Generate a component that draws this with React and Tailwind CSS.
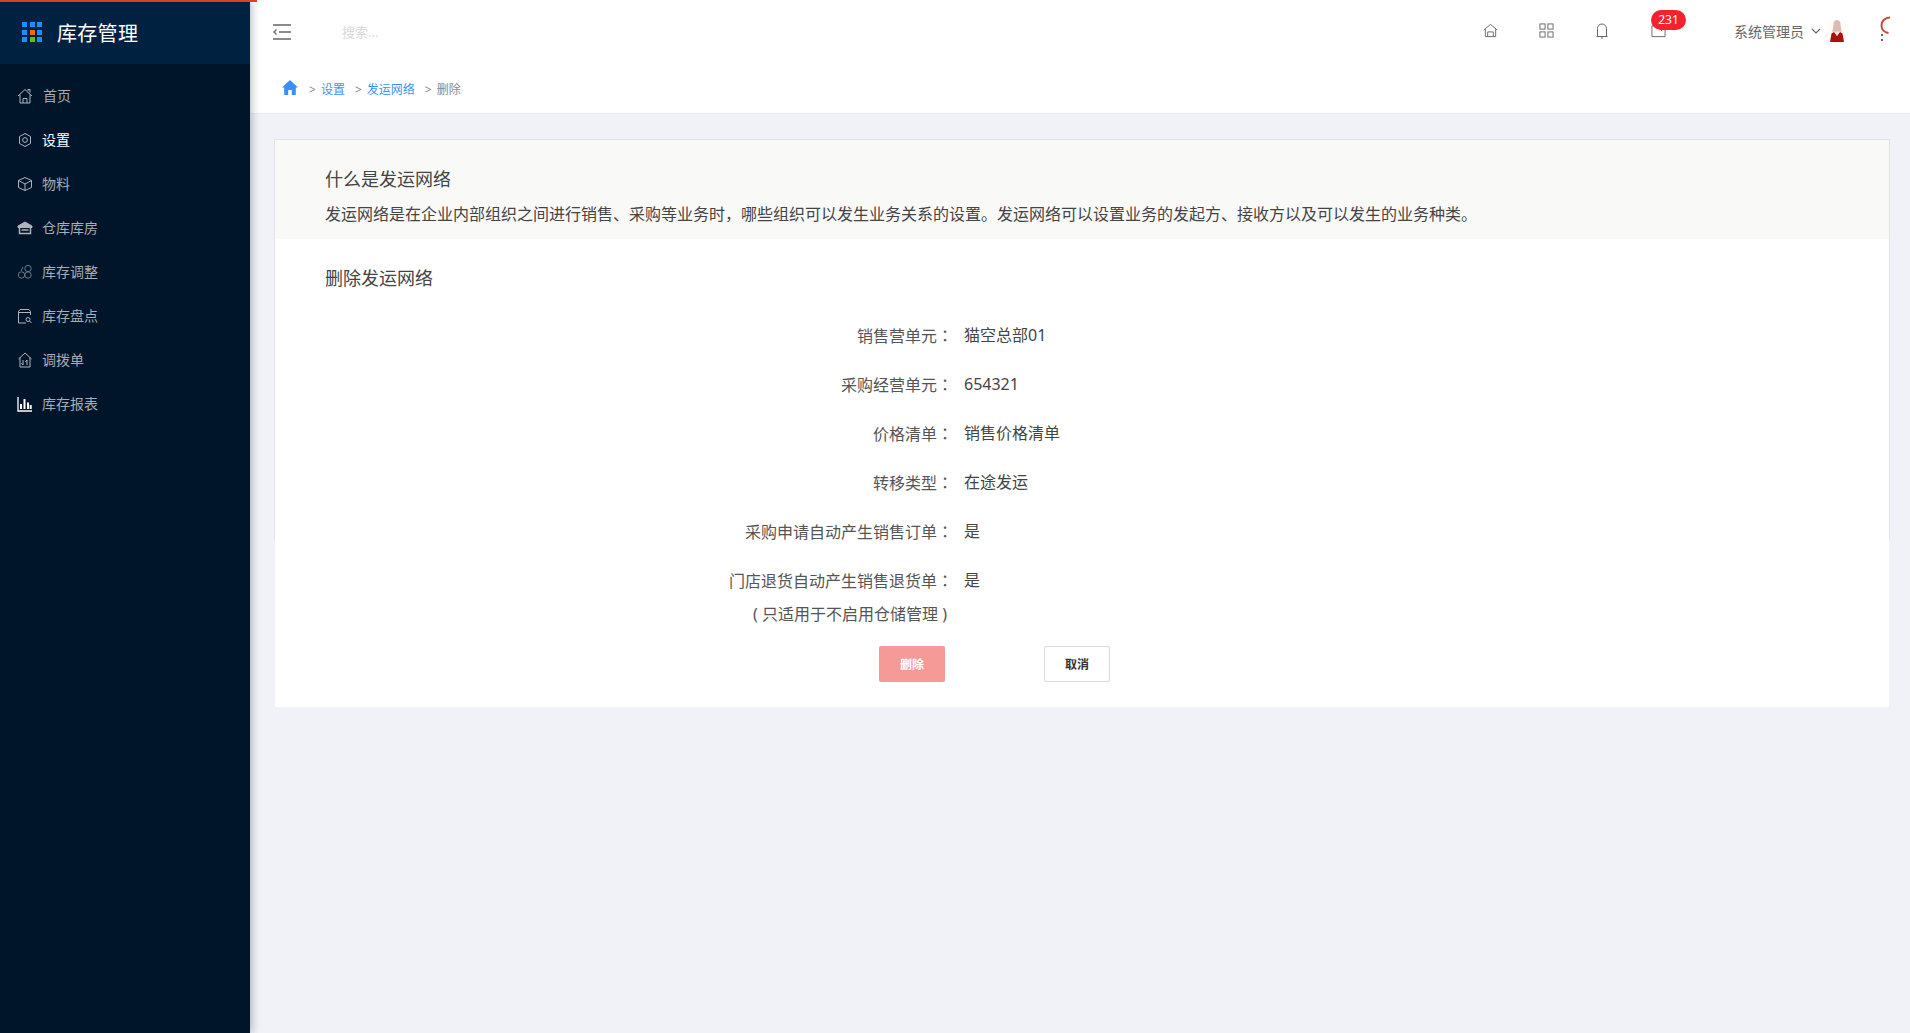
import React from "react";

const S = ({ children, size = 16, className = "" }) => (
  <svg width={size} height={size} viewBox="0 0 16 16" fill="none" stroke="currentColor" strokeWidth="1" className={className}>
    {children}
  </svg>
);

const menu = [
  { t: "首页", i: <S><path d="M1 8 8 1.5 15 8M3 6.5V15h10V6.5M6 15v-4.5h4V15M11 3V1.5h2v3.2" /></S> },
  { t: "设置", active: true, i: <S><path d="M8 1.5 13.5 4.5v7L8 14.5 2.5 11.5v-7Z" strokeLinejoin="round" /><circle cx="8" cy="8" r="2.4" /></S> },
  { t: "物料", i: <S><path d="M8 1.5 14.5 4.5v7L8 14.5 1.5 11.5v-7ZM1.5 4.5 8 8l6.5-3.5M8 8v6.5" strokeLinejoin="round" /></S> },
  { t: "仓库库房", i: <S><path d="M1 6 8 2l7 4v1.5H1Z" fill="currentColor" /><path d="M2.5 7.5v6h11v-6" strokeWidth="1.5" /><path d="M4.5 10h7" strokeWidth="1.5" /></S> },
  { t: "库存调整", dim: true, i: <S><circle cx="11" cy="4.5" r="3.2" /><circle cx="4.5" cy="11" r="3.2" /><circle cx="11" cy="11" r="3.2" /><path d="M4 7l2-4" /></S> },
  { t: "库存盘点", i: <S><path d="M13.5 7V3.5L12 1.5H3L1.5 3.5V15H9M1.5 4.5h12" /><circle cx="11" cy="11.5" r="2" /><path d="m12.5 13 2 2" /></S> },
  { t: "调拨单", i: <S><path d="M8 1 14.5 7M8 1 1.5 7M3 5.5V15h10V5.5M6 8v5M4.5 11 6 13M10 13V8M8.5 10 10 8" /></S> },
  { t: "库存报表", bright: true, i: <S><path d="M1 1v14h14" strokeWidth="1.3" /><path d="M4 13V8M7.5 13V3M11 13V6.5M13.7 13V9" strokeWidth="2" /></S> },
];

const fields = [
  ["销售营单元", "猫空总部01"],
  ["采购经营单元", "654321"],
  ["价格清单", "销售价格清单"],
  ["转移类型", "在途发运"],
  ["采购申请自动产生销售订单", "是"],
  ["门店退货自动产生销售退货单", "是"],
];

export default function App() {
  return (
    <div className="relative flex h-[1033px] w-[1910px] overflow-hidden bg-[#f0f2f7] font-['Noto_Sans','Noto_Sans_CJK_SC','Liberation_Sans',sans-serif] text-[#555]">
      <div className="absolute left-0 top-0 z-20 h-[2px] w-[257px] bg-[#d5402b]" />

      {/* sidebar */}
      <aside className="z-10 flex h-full w-[250px] shrink-0 flex-col bg-[#001529] shadow-[2px_0_8px_rgba(29,35,41,0.3)]">
        <div className="flex h-[64px] shrink-0 items-center bg-[#002140] pl-[22px]">
          <div className="grid w-[20px] grid-cols-3 gap-[2.5px]">
            {["#1890ff", "#1890ff", "#1890ff", "#1890ff", "#f56a00", "#1890ff", "#1890ff", "#52c41a", "#1890ff"].map((c, i) => (
              <span key={i} className="h-[5px] w-[5px]" style={{ background: c }} />
            ))}
          </div>
          <span className="ml-[15px] pt-[4px] text-[20px] leading-none tracking-[0.3px] text-white">库存管理</span>
        </div>
        <nav className="pt-[10px]">
          {menu.map((m) => (
            <div key={m.t} className="flex h-[44px] items-center pl-[17px]">
              <span className={`-mt-[1px] ${m.dim ? "text-[#6b7684]" : m.bright ? "text-white" : "text-[#aeb5bd]"}`}>{m.i}</span>
              <span className={`${m.t === "首页" ? "ml-[10px]" : "ml-[9px]"} -mt-[2px] text-[14px] ${m.active ? "text-white" : "text-[#a6adb4]"}`}>{m.t}</span>
            </div>
          ))}
        </nav>
      </aside>

      {/* main */}
      <div className="flex min-w-0 flex-1 flex-col">
        <header className="flex h-[64px] shrink-0 items-center bg-white pl-[23px] shadow-[0_1px_2px_rgba(0,0,0,0.08)]">
          <svg width="18" height="16" viewBox="0 0 18 16" fill="none" stroke="#666" strokeWidth="1.3">
            <path d="M0 1h18M6 8h12M0 15h18M3.5 5.5 1 8l2.5 2.5" />
          </svg>
          <span className="ml-[51px] pt-[2px] text-[13px] text-[#d9d9d9]">搜索...</span>
          <div className="ml-auto flex items-center pb-[3px] text-[#666]">
            <span className="flex w-[56px] justify-center">
              <S size={15}><path d="M.8 7.5 8 1.5l7.2 6M2.5 6.5V14.5h11V6.5M5 14.5V9.5h6v5" /></S>
            </span>
            <span className="flex w-[56px] justify-center">
              <S size={15}><rect x="1" y="1" width="5.5" height="5.5" /><rect x="9.5" y="1" width="5.5" height="5.5" /><rect x="1" y="9.5" width="5.5" height="5.5" /><rect x="9.5" y="9.5" width="5.5" height="5.5" /></S>
            </span>
            <span className="flex w-[56px] justify-center">
              <S size={16}><path d="M3.5 13V5.5a4.5 4.5 0 0 1 9 0V13M2.5 13.5h11M7 15h2" /></S>
            </span>
            <span className="relative flex w-[56px] justify-center">
              <S size={15}><path d="M1 3v11.5h14V3M1 3h14M9 6l3 2.5" /></S>
              <span className="absolute left-[21px] top-[-13px] flex h-[20px] w-[35px] items-center justify-center rounded-full bg-[#f5222d] text-[12px] leading-none text-white">231</span>
            </span>
            <span className="ml-[48px] pt-[2px] text-[14px] leading-none text-[#666]">系统管理员</span>
            <svg className="ml-[7px]" width="10" height="6" viewBox="0 0 10 6" fill="none" stroke="#666" strokeWidth="1.1"><path d="m1 1 4 4 4-4" /></svg>
            <svg className="ml-[4px]" width="24" height="24" viewBox="0 0 24 24">
              <circle cx="12" cy="12" r="12" fill="#fffdf5" />
              <path d="M12 1c2.6 0 3.6 2.2 3.6 4.8 0 3 .8 5 1.2 7H7.2c.4-2 1.2-4 1.2-7C8.4 3.2 9.4 1 12 1Z" fill="#dcbab5" />
              <path d="M9 13 12 17 15 13l2.5 1.4L19 23H5l1.5-8.6Z" fill="#a8110f" />
              <path d="M10.5 13h3L12 17Z" fill="#f4dcd5" />
            </svg>
            <div className="relative ml-[32px] mr-[27px] mt-[14px] flex h-[7px] w-[2px] flex-col justify-between">
              <span className="h-[2px] w-[2px] bg-[#666]" />
              <span className="h-[2px] w-[2px] bg-[#666]" />
              <svg className="absolute left-[-1px] top-[-18px]" width="12" height="20" viewBox="0 0 12 20" fill="none" stroke="#c8483a" strokeWidth="2">
                <path d="M10 1.5C5 1.5 1.5 5 1.5 9.5c0 4 3 7 7 7.5" />
              </svg>
            </div>
          </div>
        </header>

        <div className="flex h-[50px] shrink-0 items-center border-b border-[#e8eaee] bg-white pl-[32px] pt-[2px] text-[12px] leading-none">
          <svg width="16" height="15" viewBox="0 0 16 15" fill="#3a8ff7" className="mt-[-5px]">
            <path d="M8 0 0 7.5h2.2V15h4V10h3.6v5h4V7.5H16Z" />
          </svg>
          <span className="ml-[11px] text-[#888]">&gt;</span>
          <span className="ml-[5px] text-[#3f91f7]">设置</span>
          <span className="ml-[10px] text-[#888]">&gt;</span>
          <span className="ml-[5px] text-[#3f91f7]">发运网络</span>
          <span className="ml-[10px] text-[#888]">&gt;</span>
          <span className="ml-[5px] text-[#888]">删除</span>
        </div>

        <main className="pl-[24px] pr-[20px] pt-[25px]">
          <div className="h-[400px] border border-b-0 border-[#e2e4e4]">
            <div className="h-[99px] bg-[#f9f9f7] pl-[50px] pt-[26px]">
              <h2 className="text-[18px] font-normal leading-[26px] text-[#444]">什么是发运网络</h2>
              <p className="mt-[10px] text-[16px] leading-[24px] text-[#444]">发运网络是在企业内部组织之间进行销售、采购等业务时，哪些组织可以发生业务关系的设置。发运网络可以设置业务的发起方、接收方以及可以发生的业务种类。</p>
            </div>
            <div className="bg-white pb-[25px] pl-[50px] pt-[26px]">
              <h2 className="text-[18px] font-normal leading-[26px] text-[#444]">删除发运网络</h2>
              <div className="mt-[32px] text-[16px] leading-[24px] text-[#555]">
                {fields.map(([k, v], i) => (
                  <div key={k} className={`flex h-[24px] ${i === fields.length - 1 ? "mb-[10px]" : "mb-[25px]"}`}>
                    <span className="w-[628px] text-right">
                      {k}
                      <span className="font-['Noto_Sans_CJK_TC',sans-serif]">：</span>
                    </span>
                    <span className="ml-[11px] text-[#444]">{v}</span>
                  </div>
                ))}
                <div className="h-[24px] w-[628px] pr-[6px] text-right">( 只适用于不启用仓储管理 )</div>
              </div>
              <div className="mt-[20px] flex pl-[554px]">
                <button className="h-[36px] w-[66px] rounded-[2px] bg-[#f59a96] pt-[2px] text-[12px] font-bold text-white">删除</button>
                <button className="ml-[99px] h-[36px] w-[66px] rounded-[2px] border border-[#d9d9d9] bg-white pt-[2px] text-[12px] font-bold text-[#333]">取消</button>
              </div>
            </div>
          </div>
        </main>
      </div>
    </div>
  );
}
